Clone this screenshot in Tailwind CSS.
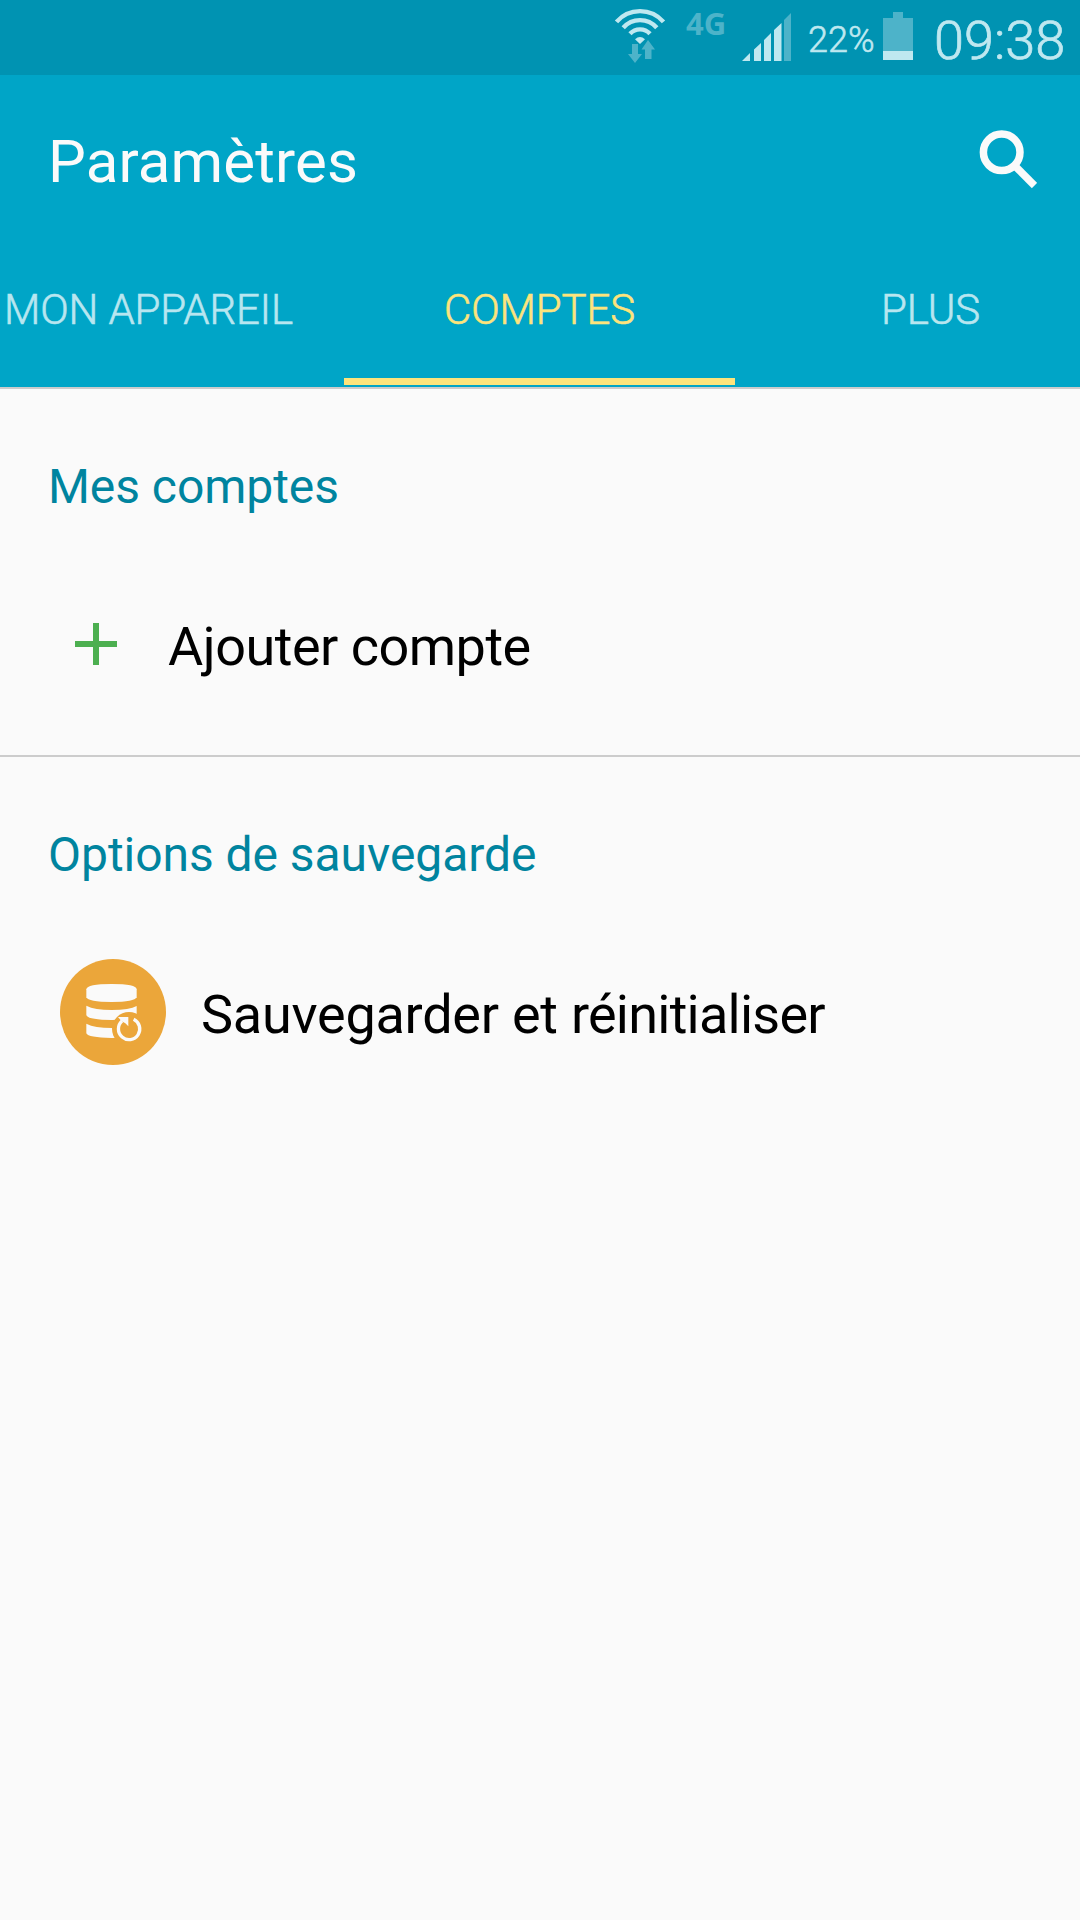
<!DOCTYPE html>
<html lang="fr">

<head>
    <meta charset="UTF-8">
    <meta name="viewport" content="width=device-width, initial-scale=1.0">
    <title>Paramètres</title>
    <script src="https://cdn.jsdelivr.net/npm/@tailwindcss/browser@4"></script>
</head>

<body class="bg-[#fafafa] min-h-screen overflow-hidden font-['Roboto',sans-serif] text-black">
    <!-- Status bar -->
    <div class="flex h-[75px] bg-[#0093b2] pl-[612px] text-[#bfe8f0] whitespace-nowrap">
        <svg class="w-14 h-[75px] shrink-0" viewBox="0 0 56 75" fill="none">
            <g stroke="#bfe8f0" stroke-width="4.400">
                <path d="M4.500 21.900A31 31 0 0 1 51.500 21.900" />
                <path d="M11.200 27.800A22.300 22.300 0 0 1 44.800 27.800" />
                <path d="M18 33.800A13.500 13.500 0 0 1 38 33.800" />
            </g>
            <path d="M28 44L23 39.300Q28 34.500 33 39.300Z" fill="#bfe8f0" />
            <path d="M20 44h6v10h4l-7 9-7-9h4zM36 40l7 9.500h-3.500V59h-6.500V49.500h-3.500z" fill="#4db3c9" />
        </svg>
        <span class="w-[72px] pl-[18px] font-['Noto_Sans',sans-serif] text-[31px] leading-[46px] font-bold text-[#4db3c9]">4G</span>
        <svg class="w-[52px] h-[75px] shrink-0" viewBox="740 0 52 75">
            <path d="M742 61L750 53V61zM754 49.500L761 43V61H754zM764 40L771 33V61H764zM774 30L781.500 23V61H774z" fill="#bfe8f0" />
            <path d="M784 20L791 13V61H784z" fill="#4db3c9" />
        </svg>
        <span class="w-[91px] pl-4 text-[36px] leading-[80px] font-light [-webkit-text-stroke:0.6px]">22%</span>
        <svg class="w-[30px] h-[75px] shrink-0" viewBox="0 0 30 75">
            <path d="M0 18h10v-6h10v6h10v33H0z" fill="#4db3c9" />
            <path d="M0 51h30v9H0z" fill="#bfe8f0" />
        </svg>
        <span class="pl-[21px] text-[54px] leading-[81px] font-light [-webkit-text-stroke:0.7px]">09:38</span>
    </div>

    <!-- Header -->
    <header class="h-[314px] bg-[#00a5c7] border-b-2 border-[#ccc]">
        <div class="flex items-center justify-between h-[173px] pl-12 pr-[43px]">
            <h1 class="text-[60px] leading-[70px] tracking-[0.15px] text-[#fafafa]">Paramètres</h1>
            <svg class="w-[60px] h-[60px] mb-1.5" viewBox="977 129 60 60" fill="none" stroke="#fafafa">
                <circle cx="1001.700" cy="152.300" r="18.300" stroke-width="7.500" />
                <path d="M1014 165L1034.500 185.500" stroke-width="7.500" />
            </svg>
        </div>
        <nav class="flex h-[137px] overflow-hidden text-[42px] leading-[123px] tracking-[-0.1px] font-light [-webkit-text-stroke:0.6px] text-[#b8e6f0] whitespace-nowrap">
            <a class="w-[344px] shrink-0 pl-1">MON APPAREIL</a>
            <a class="w-[391px] shrink-0 text-center text-[#fde47c] border-b-[7px] border-[#fde47c]">COMPTES</a>
            <a class="w-[391px] shrink-0 text-center">PLUS</a>
        </nav>
    </header>

    <!-- Accounts -->
    <section class="h-[368px] border-b-2 border-[#ccc]">
        <h2 class="pl-12 text-[48px] leading-[195px] tracking-[-0.05px] text-[#00849f]">Mes comptes</h2>
        <div class="flex items-center h-[125px] pl-[75px]">
            <svg class="w-[42px] h-[42px] mb-[5px]" viewBox="0 0 42 42" fill="#4caf50">
                <path d="M18 0h6v18h18v6H24v18h-6V24H0v-6h18z" />
            </svg>
            <span class="pl-[51px] text-[54px] leading-[64px] tracking-[-0.5px]">Ajouter compte</span>
        </div>
    </section>

    <!-- Backup -->
    <section>
        <h2 class="pl-12 text-[48px] leading-[195px] tracking-[-0.05px] text-[#00849f]">Options de sauvegarde</h2>
        <div class="flex items-center h-[125px] pl-[60px]">
            <svg class="w-[106px] h-[106px] mb-[5px]" viewBox="31 57 318 318">
                <circle cx="190" cy="216" r="159" fill="#eba63a" />
                <g fill="#fafafa">
                    <path d="M110 148Q112 132 186 132Q260 132 261 148V172Q255 186 186 186Q115 186 110 172Z" />
                    <path d="M110 197Q135 210 186 210Q240 210 261 198V226Q240 240 186 240Q115 239 110 226Z" />
                    <path d="M110 251Q135 264 186 264Q240 264 261 252V280Q240 294 186 294Q115 293 110 280Z" />
                </g>
                <circle cx="238" cy="267" r="51" fill="#eba63a" />
                <path d="M252 238A32 32 0 1 1 217 243" fill="none" stroke="#fafafa" stroke-width="10" />
                <path d="M205 231H236V259L227 250L215 243Z" fill="#fafafa" />
            </svg>
            <span class="pl-[35px] text-[54px] leading-[64px] tracking-[-0.25px]">Sauvegarder et <span class="tracking-[-0.75px]">réinitialiser</span></span>
        </div>
    </section>
</body>

</html>
